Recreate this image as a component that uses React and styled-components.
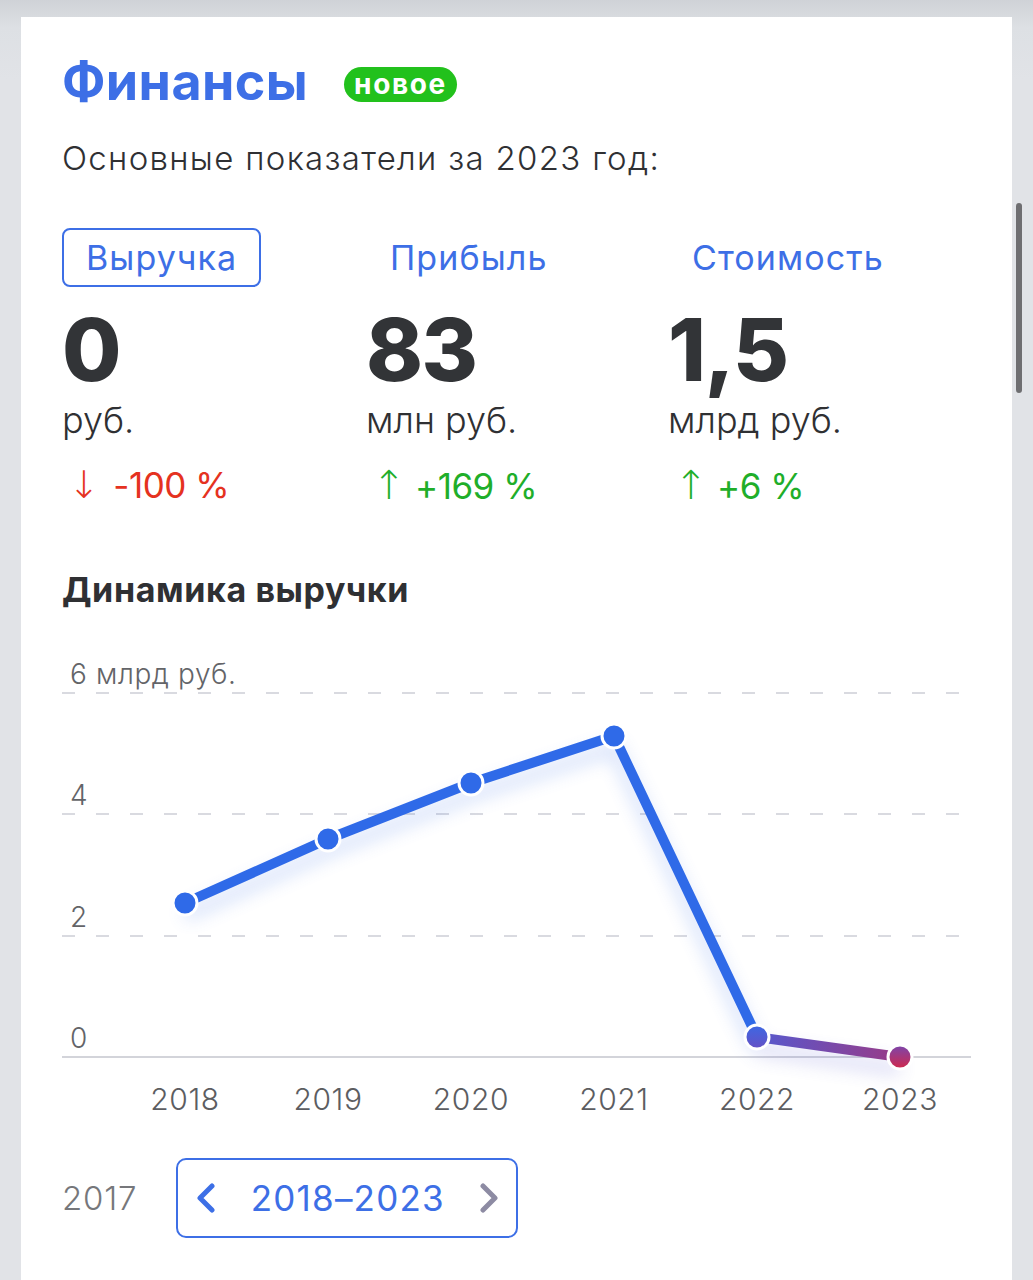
import React from "react";
import styled, { createGlobalStyle } from "styled-components";

const Global = createGlobalStyle`
  html, body { margin: 0; padding: 0; }
  body {
    background: linear-gradient(180deg, #cfd2d7 0px, #dde0e4 28px, #e1e3e7 80px);
    font-family: Inter, "Noto Sans", "Liberation Sans", sans-serif;
    overflow: hidden;
  }
`;

const Page = styled.div`
  position: relative;
  height: 1280px;
  padding: 17px 21px 0 21px;
  box-sizing: border-box;
`;

const Card = styled.section`
  width: 991px;
  height: 1263px;
  background: #ffffff;
  box-sizing: border-box;
  padding: 35px 41px 0 41px;
  display: flex;
  flex-direction: column;
`;

const Header = styled.div`
  display: flex;
  align-items: center;
  gap: 36px;
  height: 60px;
`;

const Title = styled.h1`
  margin: 0;
  font-size: 52px;
  line-height: 60px;
  font-weight: 700;
  color: #3d6fe6;
  letter-spacing: 0.4px;
`;

const Badge = styled.span`
  display: inline-flex;
  align-items: center;
  height: 35px;
  padding: 0 10px;
  margin-top: 4px;
  border-radius: 18px;
  background: #22c11c;
  color: #ffffff;
  font-size: 28px;
  font-weight: 700;
  letter-spacing: 1.6px;
`;

const Subtitle = styled.p`
  margin: 26px 0 0 0;
  font-size: 33px;
  line-height: 40px;
  font-weight: 300;
  color: #2f3033;
  letter-spacing: 1.3px;
`;

const Metrics = styled.div`
  margin-top: 50px;
  display: grid;
  grid-template-columns: 304px 302px 1fr;
`;

const Metric = styled.div`
  display: flex;
  flex-direction: column;
  align-items: flex-start;
`;

const Tab = styled.button`
  display: inline-flex;
  align-items: center;
  height: 59px;
  box-sizing: border-box;
  padding: 0 22px;
  border: 2px solid ${(p) => (p.$active ? "#3d6fe6" : "transparent")};
  border-radius: 8px;
  background: transparent;
  color: #3d6fe6;
  font-family: Inter, "Noto Sans", sans-serif;
  font-size: 34px;
  font-weight: 400;
  letter-spacing: 1.1px;
  cursor: pointer;
`;

const Value = styled.div`
  margin-top: 18px;
  font-size: 86px;
  line-height: 90px;
  font-weight: 800;
  color: #323437;
  letter-spacing: -1.5px;
`;

const Unit = styled.div`
  margin-top: 3px;
  font-size: 36px;
  line-height: 44px;
  font-weight: 300;
  color: #2f3033;
`;

const Change = styled.div`
  margin-top: 21px;
  display: flex;
  align-items: baseline;
  gap: ${(p) => (p.$up ? "10px" : "14px")};
  font-size: 35px;
  line-height: 44px;
  font-weight: 400;
  color: ${(p) => (p.$up ? "#1fae2a" : "#e5321f")};
  padding-left: 6px;
  letter-spacing: -0.5px;
`;

const Arrow = styled.span`
  font-family: "DejaVu Sans", sans-serif;
  font-weight: 300;
  font-size: ${(p) => (p.$up ? "40px" : "38px")};
`;

const SectionTitle = styled.h2`
  margin: 62px 0 0 0;
  font-size: 34px;
  line-height: 40px;
  font-weight: 700;
  color: #2f3033;
  letter-spacing: 0.6px;
`;

const ChartWrap = styled.div`
  margin-top: 41px;
  width: 909px;
  height: 475px;
`;

const Footer = styled.div`
  margin-top: 32px;
  display: flex;
  align-items: center;
  gap: 39px;
`;

const YearLink = styled.span`
  font-size: 33px;
  font-weight: 300;
  color: #76777b;
  letter-spacing: 0.8px;
`;

const RangeBox = styled.div`
  display: flex;
  align-items: center;
  justify-content: space-between;
  width: 342px;
  height: 80px;
  box-sizing: border-box;
  padding: 0 16px 0 17px;
  border: 2px solid #3d6fe6;
  border-radius: 10px;
`;

const RangeText = styled.span`
  font-size: 35px;
  font-weight: 400;
  color: #3d6fe6;
  letter-spacing: 1.2px;
`;

const Scrollbar = styled.div`
  position: absolute;
  top: 203px;
  right: 11px;
  width: 6px;
  height: 190px;
  border-radius: 3px;
  background: #6e6e71;
`;

const Chevron = ({ dir, color }) => (
  <svg width="22" height="30" viewBox="0 0 22 30">
    <polyline
      points={dir === "left" ? "17,3 5,15 17,27" : "5,3 17,15 5,27"}
      fill="none"
      stroke={color}
      strokeWidth="5"
      strokeLinecap="round"
      strokeLinejoin="round"
    />
  </svg>
);

const points = [
  { year: "2018", x: 123, y: 252 },
  { year: "2019", x: 266, y: 188 },
  { year: "2020", x: 409, y: 132 },
  { year: "2021", x: 552, y: 85 },
  { year: "2022", x: 695, y: 386 },
  { year: "2023", x: 838, y: 406 },
];

const grid = [
  { y: 42, label: "6 млрд руб.", dashed: true },
  { y: 163, label: "4", dashed: true },
  { y: 285, label: "2", dashed: true },
  { y: 406, label: "0", dashed: false },
];

const Chart = () => {
  const main = points.slice(0, 5).map((p) => `${p.x},${p.y}`).join(" ");
  return (
    <svg width="909" height="475" viewBox="0 0 909 475">
      <defs>
        <filter id="glow" x="-20%" y="-20%" width="140%" height="160%">
          <feGaussianBlur stdDeviation="9" />
        </filter>
        <linearGradient id="tail" gradientUnits="userSpaceOnUse" x1="695" y1="386" x2="838" y2="406">
          <stop offset="0" stopColor="#5559cf" />
          <stop offset="1" stopColor="#9a3a86" />
        </linearGradient>
        <linearGradient id="dot22" x1="0" y1="0" x2="0" y2="1">
          <stop offset="0" stopColor="#3c68e4" />
          <stop offset="1" stopColor="#6650c4" />
        </linearGradient>
        <linearGradient id="dot23" x1="0" y1="0" x2="0" y2="1">
          <stop offset="0" stopColor="#7a46ae" />
          <stop offset="1" stopColor="#d2284a" />
        </linearGradient>
      </defs>
      {grid.map((g) => (
        <g key={g.label}>
          <line
            x1="0"
            x2="909"
            y1={g.y}
            y2={g.y}
            stroke={g.dashed ? "#d9dae0" : "#d3d4da"}
            strokeWidth="2"
            strokeDasharray={g.dashed ? "13 21" : undefined}
          />
          <text
            x="8"
            y={g.y - 9}
            fontFamily="Inter, 'Noto Sans', sans-serif"
            fontSize="28"
            fontWeight="300"
            letterSpacing="0.6"
            fill="#636468"
          >
            {g.label}
          </text>
        </g>
      ))}
      <g filter="url(#glow)" opacity="0.22" transform="translate(0,12)">
        <polyline points={main} fill="none" stroke="#3b6fe8" strokeWidth="12" />
        <line x1="695" y1="386" x2="838" y2="406" stroke="#5559cf" strokeWidth="12" />
      </g>
      <polyline
        points={main}
        fill="none"
        stroke="#2f6ae8"
        strokeWidth="10"
        strokeLinejoin="round"
      />
      <line x1="695" y1="386" x2="838" y2="406" stroke="url(#tail)" strokeWidth="10" />
      {points.map((p, i) => (
        <circle
          key={p.year}
          cx={p.x}
          cy={p.y}
          r="12"
          fill={i === 4 ? "url(#dot22)" : i === 5 ? "url(#dot23)" : "#2f6ae8"}
          stroke="#ffffff"
          strokeWidth="3"
        />
      ))}
      {points.map((p) => (
        <text
          key={"l" + p.year}
          x={p.x}
          y="459"
          textAnchor="middle"
          fontFamily="Inter, 'Noto Sans', sans-serif"
          fontSize="30"
          fontWeight="300"
          letterSpacing="0.6"
          fill="#5c5d61"
        >
          {p.year}
        </text>
      ))}
    </svg>
  );
};

const metrics = [
  { tab: "Выручка", active: true, value: "0", unit: "руб.", change: "-100 %", up: false },
  { tab: "Прибыль", active: false, value: "83", unit: "млн руб.", change: "+169 %", up: true },
  { tab: "Стоимость", active: false, value: "1,5", unit: "млрд руб.", change: "+6 %", up: true },
];

export default function App() {
  return (
    <>
      <Global />
      <Page>
        <Card>
          <Header>
            <Title>Финансы</Title>
            <Badge>новое</Badge>
          </Header>
          <Subtitle>Основные показатели за 2023 год:</Subtitle>
          <Metrics>
            {metrics.map((m) => (
              <Metric key={m.tab}>
                <Tab $active={m.active}>{m.tab}</Tab>
                <Value>{m.value}</Value>
                <Unit>{m.unit}</Unit>
                <Change $up={m.up}>
                  <Arrow $up={m.up}>{m.up ? "↑" : "↓"}</Arrow>
                  <span>{m.change}</span>
                </Change>
              </Metric>
            ))}
          </Metrics>
          <SectionTitle>Динамика выручки</SectionTitle>
          <ChartWrap>
            <Chart />
          </ChartWrap>
          <Footer>
            <YearLink>2017</YearLink>
            <RangeBox>
              <Chevron dir="left" color="#3d6fe6" />
              <RangeText>2018–2023</RangeText>
              <Chevron dir="right" color="#8d8ba3" />
            </RangeBox>
          </Footer>
        </Card>
        <Scrollbar />
      </Page>
    </>
  );
}
